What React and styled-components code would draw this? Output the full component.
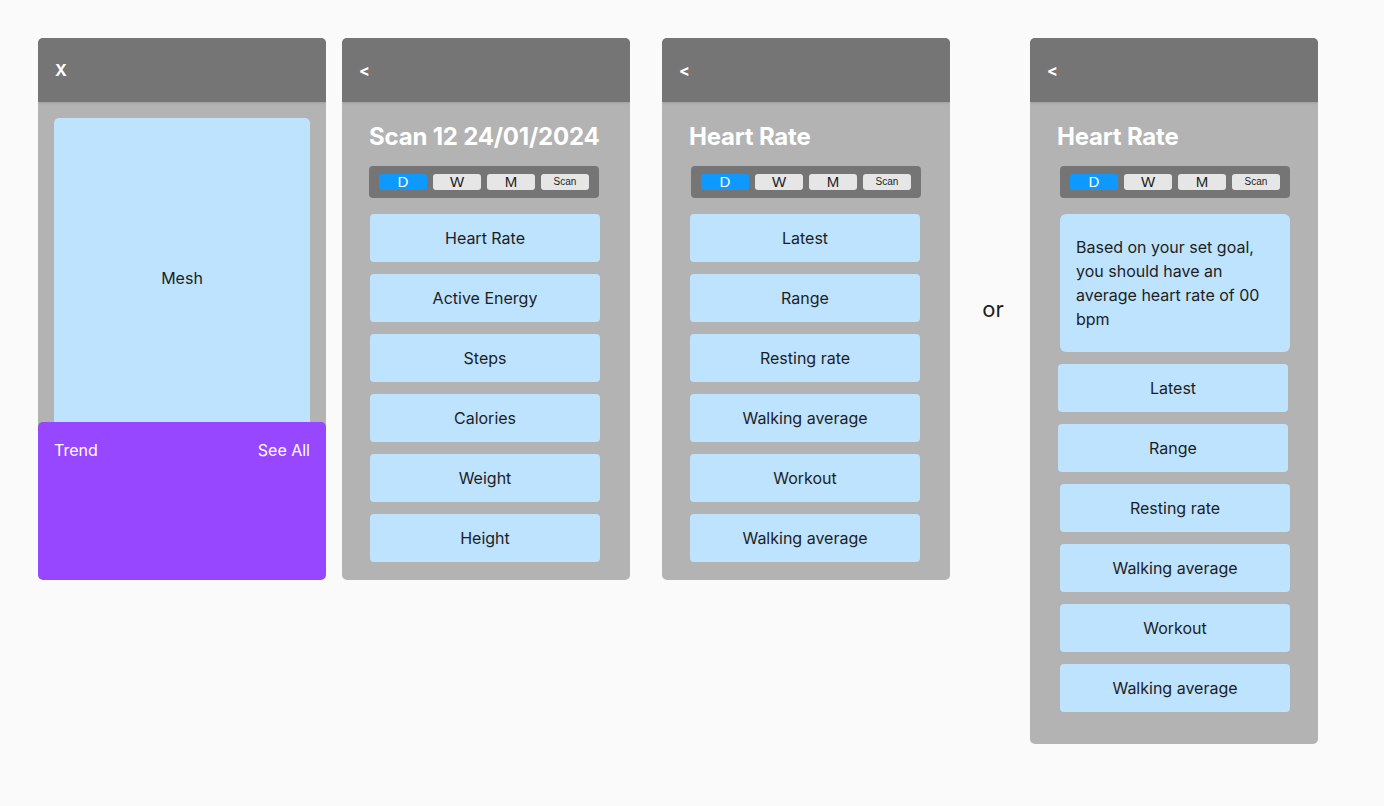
import styled, { createGlobalStyle } from 'styled-components';

const GlobalStyle = createGlobalStyle`
  html, body {
    margin: 0;
    padding: 0;
    background: #fafafa;
    font-family: Inter, "Noto Sans", sans-serif;
  }
`;

const heartRows = ['Latest', 'Range', 'Resting rate', 'Walking average', 'Workout', 'Walking average'];
const scanRows = ['Heart Rate', 'Active Energy', 'Steps', 'Calories', 'Weight', 'Height'];

function Segments({ indent }) {
    return (
        <Segmented $indent={indent}>
            <Segment $active>D</Segment>
            <Segment>W</Segment>
            <Segment>M</Segment>
            <Segment $small>Scan</Segment>
        </Segmented>
    );
}

function App() {
    return (
        <>
            <GlobalStyle />
            <Canvas>
                <Frame $height={542}>
                    <Header>X</Header>
                    <MeshBody>
                        <Mesh>Mesh</Mesh>
                    </MeshBody>
                    <TrendPanel>
                        <span>Trend</span>
                        <span>See All</span>
                    </TrendPanel>
                </Frame>

                <Frame $height={542} $space={16}>
                    <Header>&lt;</Header>
                    <Body>
                        <Title>Scan 12 24/01/2024</Title>
                        <Segments indent={0} />
                        <List>
                            {scanRows.map((label) => (
                                <Row key={label} $indent={1}>{label}</Row>
                            ))}
                        </List>
                    </Body>
                </Frame>

                <Frame $height={542} $space={32}>
                    <Header>&lt;</Header>
                    <Body>
                        <Title>Heart Rate</Title>
                        <Segments indent={2} />
                        <List>
                            {heartRows.map((label, i) => (
                                <Row key={i} $indent={1}>{label}</Row>
                            ))}
                        </List>
                    </Body>
                </Frame>

                <Or>or</Or>

                <Frame $height={706}>
                    <Header>&lt;</Header>
                    <Body>
                        <Title>Heart Rate</Title>
                        <Segments indent={3} />
                        <List>
                            <GoalCard>
                                Based on your set goal, you should have an average heart rate of 00 bpm
                            </GoalCard>
                            {heartRows.map((label, i) => (
                                <Row key={i} $indent={i < 2 ? 1 : 3}>{label}</Row>
                            ))}
                        </List>
                    </Body>
                </Frame>
            </Canvas>
        </>
    );
}

export default App;

const Canvas = styled.div`
    display: flex;
    align-items: flex-start;
    padding: 38px;
    min-height: 806px;
    box-sizing: border-box;
`;

const Frame = styled.section`
    width: 288px;
    height: ${(p) => p.$height}px;
    margin-left: ${(p) => p.$space || 0}px;
    flex-shrink: 0;
    background: #b3b3b3;
    border-radius: 5px;
    overflow: hidden;
    display: flex;
    flex-direction: column;
`;

const Header = styled.div`
    height: 64px;
    flex-shrink: 0;
    background: #757575;
    color: #ffffff;
    font-weight: 700;
    font-size: 16px;
    display: flex;
    align-items: center;
    padding: 0 17px;
    box-shadow: 0 1px 2px rgba(0, 0, 0, 0.12);
    position: relative;
    z-index: 1;
`;

const MeshBody = styled.div`
    padding: 16px 16px 0;
`;

const Mesh = styled.div`
    height: 320px;
    background: #bde3ff;
    border-radius: 5px;
    display: flex;
    align-items: center;
    justify-content: center;
    font-size: 16px;
    color: #1e1e1e;
`;

const TrendPanel = styled.div`
    flex: 1;
    margin-top: -16px;
    position: relative;
    background: #9747ff;
    border-radius: 5px;
    padding: 19px 16px;
    display: flex;
    justify-content: space-between;
    align-items: flex-start;
    color: #ffffff;
    font-size: 16px;
    line-height: 19px;
`;

const Body = styled.div`
    padding: 16px 0 0 27px;
    display: flex;
    flex-direction: column;
`;

const Title = styled.h1`
    margin: 0;
    height: 38px;
    line-height: 38px;
    font-size: 24px;
    font-weight: 700;
    color: #ffffff;
    letter-spacing: -0.2px;
`;

const Segmented = styled.div`
    margin: 10px 0 0 ${(p) => p.$indent}px;
    width: 230px;
    height: 32px;
    box-sizing: border-box;
    padding: 8px 10px;
    background: #757575;
    border-radius: 4px;
    display: flex;
    gap: 6px;
`;

const Segment = styled.div`
    width: 48px;
    height: 16px;
    border-radius: 3px;
    background: ${(p) => (p.$active ? '#0d99ff' : '#e6e6e6')};
    color: ${(p) => (p.$active ? '#ffffff' : '#1e1e1e')};
    font-family: "Liberation Sans", Arial, sans-serif;
    font-size: ${(p) => (p.$small ? '10px' : '15px')};
    line-height: 16px;
    text-align: center;
`;

const List = styled.div`
    margin-top: 16px;
    display: flex;
    flex-direction: column;
    gap: 12px;
`;

const Row = styled.div`
    margin-left: ${(p) => p.$indent}px;
    width: 230px;
    height: 48px;
    background: #bde3ff;
    border-radius: 4px;
    display: flex;
    align-items: center;
    justify-content: center;
    font-size: 16px;
    color: #1e1e1e;
`;

const GoalCard = styled.div`
    margin-left: 3px;
    width: 230px;
    height: 138px;
    box-sizing: border-box;
    padding: 21px 16px;
    background: #bde3ff;
    border-radius: 6px;
    font-size: 16px;
    line-height: 24px;
    color: #1e1e1e;
`;

const Or = styled.div`
    width: 80px;
    height: 542px;
    flex-shrink: 0;
    display: flex;
    align-items: center;
    justify-content: center;
    padding-left: 6px;
    box-sizing: border-box;
    font-size: 22px;
    color: #1e1e1e;
`;
